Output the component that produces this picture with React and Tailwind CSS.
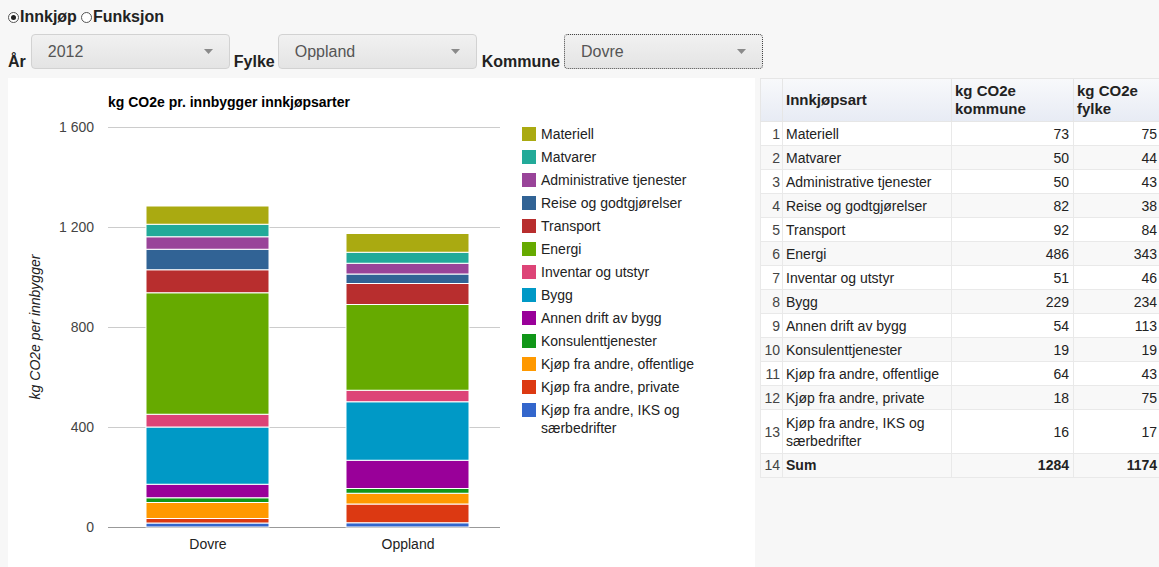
import React from 'react';

const categories = [
  { name: 'Materiell', color: '#aaaa11', kommune: 73, fylke: 75 },
  { name: 'Matvarer', color: '#22aa99', kommune: 50, fylke: 44 },
  { name: 'Administrative tjenester', color: '#994499', kommune: 50, fylke: 43 },
  { name: 'Reise og godtgjørelser', color: '#316395', kommune: 82, fylke: 38 },
  { name: 'Transport', color: '#b82e2e', kommune: 92, fylke: 84 },
  { name: 'Energi', color: '#66aa00', kommune: 486, fylke: 343 },
  { name: 'Inventar og utstyr', color: '#dd4477', kommune: 51, fylke: 46 },
  { name: 'Bygg', color: '#0099c6', kommune: 229, fylke: 234 },
  { name: 'Annen drift av bygg', color: '#990099', kommune: 54, fylke: 113 },
  { name: 'Konsulenttjenester', color: '#109618', kommune: 19, fylke: 19 },
  { name: 'Kjøp fra andre, offentlige', color: '#ff9900', kommune: 64, fylke: 43 },
  { name: 'Kjøp fra andre, private', color: '#dc3912', kommune: 18, fylke: 75 },
  { name: 'Kjøp fra andre, IKS og særbedrifter', color: '#3366cc', kommune: 16, fylke: 17 },
];

const FONT = { fontFamily: '"Liberation Sans", Arial, sans-serif' };

const Radio = ({ checked }) => (
  <span className="inline-flex w-[11px] h-[11px] rounded-full border border-[#555] bg-white items-center justify-center mr-px">
    {checked && <span className="w-[5px] h-[5px] rounded-full bg-[#222]" />}
  </span>
);

const Select = ({ value, focused }) => (
  <div
    className={`w-[199px] h-[35px] rounded-[4px] flex items-center justify-between pl-4 pr-4 text-[16px] font-normal text-[#555] bg-gradient-to-b from-[#f1f1f1] to-[#e4e4e4] ${
      focused ? 'border border-dotted border-[#444]' : 'border border-[#d2d2d2]'
    }`}
  >
    <span>{value}</span>
    <svg width="9" height="5" viewBox="0 0 9 5">
      <path d="M0 0 L9 0 L4.5 5 Z" fill="#8a8a8a" />
    </svg>
  </div>
);

const Chart = () => {
  const base = 449;
  const scale = 0.25;
  const bars = [
    { label: 'Dovre', x: 138, key: 'kommune' },
    { label: 'Oppland', x: 338, key: 'fylke' },
  ];
  const ticks = [
    { v: 1600, label: '1 600' },
    { v: 1200, label: '1 200' },
    { v: 800, label: '800' },
    { v: 400, label: '400' },
    { v: 0, label: '0' },
  ];
  const stackOrder = [...categories].reverse();

  return (
    <svg width="747" height="489" style={FONT}>
      <text x="100" y="29" fontSize="14" fontWeight="bold" fill="#000">
        kg CO2e pr. innbygger innkjøpsarter
      </text>
      {ticks.map((t) => {
        const y = base - t.v * scale;
        return (
          <g key={t.v}>
            <line x1="100" x2="492" y1={y + 0.5} y2={y + 0.5} stroke={t.v === 0 ? '#999' : '#ccc'} strokeWidth="1" />
            <text x="86" y={y + 5} fontSize="14" textAnchor="end" fill="#444">
              {t.label}
            </text>
          </g>
        );
      })}
      <text
        x="0"
        y="0"
        fontSize="14"
        fontStyle="italic"
        fill="#222"
        textAnchor="middle"
        transform="translate(32 249) rotate(-90)"
      >
        kg CO2e per innbygger
      </text>
      {bars.map((bar) => {
        let acc = 0;
        return (
          <g key={bar.label}>
            {stackOrder.map((c) => {
              const h = c[bar.key] * scale;
              const y = base - acc - h;
              acc += h;
              return (
                <rect
                  key={c.name}
                  x={bar.x}
                  y={y}
                  width="123"
                  height={h}
                  fill={c.color}
                  stroke="#fff"
                  strokeWidth="1"
                />
              );
            })}
            <text x={bar.x + 62} y="471" fontSize="14" textAnchor="middle" fill="#222">
              {bar.label}
            </text>
          </g>
        );
      })}
      {categories.map((c, i) => {
        const cy = 56 + i * 23;
        const last = i === categories.length - 1;
        return (
          <g key={c.name}>
            <rect x="514" y={cy - 7} width="14" height="14" fill={c.color} />
            {last ? (
              <text x="533" y={cy + 5} fontSize="14" fill="#222">
                <tspan x="533">Kjøp fra andre, IKS og</tspan>
                <tspan x="533" dy="18">særbedrifter</tspan>
              </text>
            ) : (
              <text x="533" y={cy + 5} fontSize="14" fill="#222">
                {c.name}
              </text>
            )}
          </g>
        );
      })}
    </svg>
  );
};

const DataTable = () => {
  const sumK = categories.reduce((s, c) => s + c.kommune, 0);
  const sumF = categories.reduce((s, c) => s + c.fylke, 0);
  return (
    <table className="border-collapse text-[14px] text-[#222] w-[400px] table-fixed">
      <colgroup>
        <col className="w-[22px]" />
        <col className="w-[169px]" />
        <col className="w-[122px]" />
        <col className="w-[87px]" />
      </colgroup>
      <thead>
        <tr className="h-[43px] bg-gradient-to-b from-[#f8f9fb] to-[#e7ebf4] text-left align-middle">
          <th className="border border-[#e6e6e6]" />
          <th className="border border-[#e6e6e6] px-[3px] text-[15px] font-bold leading-[18px]">Innkjøpsart</th>
          <th className="border border-[#e6e6e6] px-[3px] text-[15px] font-bold leading-[18px]">
            kg CO2e
            <br />
            kommune
          </th>
          <th className="border border-[#e6e6e6] px-[3px] text-[15px] font-bold leading-[18px]">
            kg CO2e
            <br />
            fylke
          </th>
        </tr>
      </thead>
      <tbody>
        {categories.map((c, i) => {
          const twoLine = i === 12;
          return (
            <tr
              key={c.name}
              className={`${twoLine ? 'h-[44px]' : 'h-[24px]'} ${i % 2 === 1 ? 'bg-[#f8f8f8]' : 'bg-white'}`}
            >
              <td className="border border-[#e9e9e9] text-right pr-[2px] text-[#444] leading-[18px]">
                {i + 1}
              </td>
              <td className="border border-[#e9e9e9] px-[3px] leading-[18px]">
                {twoLine ? (
                  <>
                    Kjøp fra andre, IKS og
                    <br />
                    særbedrifter
                  </>
                ) : (
                  c.name
                )}
              </td>
              <td className="border border-[#e9e9e9] px-[4px] text-right leading-[18px]">{c.kommune}</td>
              <td className="border border-[#e9e9e9] px-[3px] text-right leading-[18px]">{c.fylke}</td>
            </tr>
          );
        })}
        <tr className="h-[24px] bg-[#f8f8f8] font-bold">
          <td className="border border-[#e9e9e9] text-right pr-[2px] text-[#444] font-normal">14</td>
          <td className="border border-[#e9e9e9] px-[3px]">Sum</td>
          <td className="border border-[#e9e9e9] px-[4px] text-right">{sumK}</td>
          <td className="border border-[#e9e9e9] px-[3px] text-right">{sumF}</td>
        </tr>
      </tbody>
    </table>
  );
};

export default function App() {
  return (
    <div className="w-[1159px] h-[567px] overflow-hidden bg-[#f7f7f7] text-[#222]" style={FONT}>
      <div className="h-[34px] pl-2 flex items-center text-[16px] font-bold text-[#222]">
        <Radio checked />
        <span>Innkjøp</span>
        <span className="ml-[4px]" />
        <Radio />
        <span>Funksjon</span>
      </div>
      <div className="h-[44px] pl-2 flex items-start text-[16px] font-bold text-[#222]">
        <span className="self-start mt-[16px] mr-[5px]">År</span>
        <Select value="2012" />
        <span className="self-start mt-[16px] ml-[4px] mr-[3px]">Fylke</span>
        <Select value="Oppland" />
        <span className="self-start mt-[16px] ml-[5px] mr-[4px]">Kommune</span>
        <Select value="Dovre" focused />
      </div>
      <div className="flex pl-2">
        <div className="w-[747px] h-[489px] bg-white">
          <Chart />
        </div>
        <div className="ml-[5px] w-[399px] overflow-hidden">
          <DataTable />
        </div>
      </div>
    </div>
  );
}
